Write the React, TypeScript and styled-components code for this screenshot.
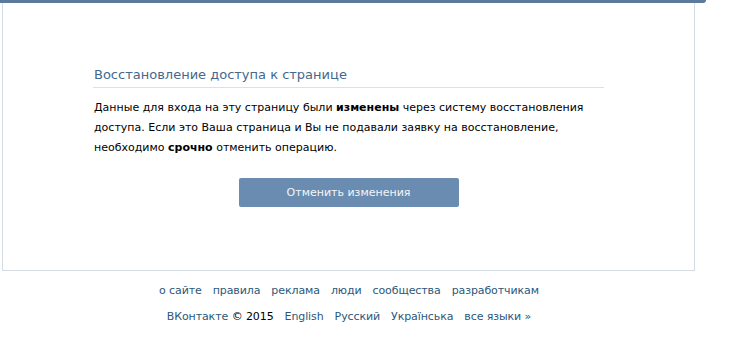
import styled, { createGlobalStyle } from "styled-components"

const GlobalStyle = createGlobalStyle`
    body {
        margin: 0;
        background: #fff;
        font-family: "DejaVu Sans", Tahoma, sans-serif;
        font-size: 11px;
    }
`

const Page = styled.div`
    width: 706px;
`

const TopBar = styled.div`
    height: 3px;
    background: #5b7a9c;
    border-radius: 0 0 4px 0;
`

const Panel = styled.div`
    margin-left: 2px;
    width: 693px;
    height: 268px;
    border: 1px solid #d5dbe3;
    border-top: none;
    box-sizing: border-box;
    padding: 64px 90px 0 90px;
`

const Title = styled.h2`
    margin: 0;
    font-size: 13px;
    font-weight: normal;
    color: #45688e;
    padding: 0 0 5px 1px;
    border-bottom: 1px solid #dae1e8;
`

const Text = styled.div`
    margin: 10px 0 0 1px;
    color: #000;
`

const Line = styled.div`
    line-height: 20px;
    white-space: nowrap;
`

const Actions = styled.div`
    display: flex;
    justify-content: center;
    margin-top: 20px;
`

const Button = styled.button`
    width: 220px;
    height: 29px;
    border: none;
    border-radius: 2px;
    background: #6a8cb1;
    color: #f4f6f9;
    font-family: inherit;
    font-size: 11px;
    cursor: pointer;
`

const Footer = styled.div`
    width: 698px;
    display: flex;
    flex-direction: column;
    align-items: center;
    gap: 10px;
    padding-top: 12px;
`

const Row = styled.div`
    display: flex;
    gap: 11px;
`

const Link = styled.a<{ $plain?: boolean }>`
    color: ${p => (p.$plain ? "#000" : "#2b587a")};
    text-decoration: none;
    line-height: 16px;
    letter-spacing: -0.1px;
`

const App = () => {
    return (
        <Page>
            <GlobalStyle />
            <TopBar />
            <Panel>
                <Title>Восстановление доступа к странице</Title>
                <Text>
                    <Line>Данные для входа на эту страницу были <b>изменены</b> через систему восстановления</Line>
                    <Line>доступа. Если это Ваша страница и Вы не подавали заявку на восстановление,</Line>
                    <Line>необходимо <b>срочно</b> отменить операцию.</Line>
                </Text>
                <Actions>
                    <Button>Отменить изменения</Button>
                </Actions>
            </Panel>
            <Footer>
                <Row>
                    <Link href="#">о сайте</Link>
                    <Link href="#">правила</Link>
                    <Link href="#">реклама</Link>
                    <Link href="#">люди</Link>
                    <Link href="#">сообщества</Link>
                    <Link href="#">разработчикам</Link>
                </Row>
                <Row>
                    <span>
                        <Link href="#">ВКонтакте</Link> <Link as="span" $plain>© 2015</Link>
                    </span>
                    <Link href="#">English</Link>
                    <Link href="#">Русский</Link>
                    <Link href="#">Українська</Link>
                    <Link href="#">все языки »</Link>
                </Row>
            </Footer>
        </Page>
    )
}

export default App
